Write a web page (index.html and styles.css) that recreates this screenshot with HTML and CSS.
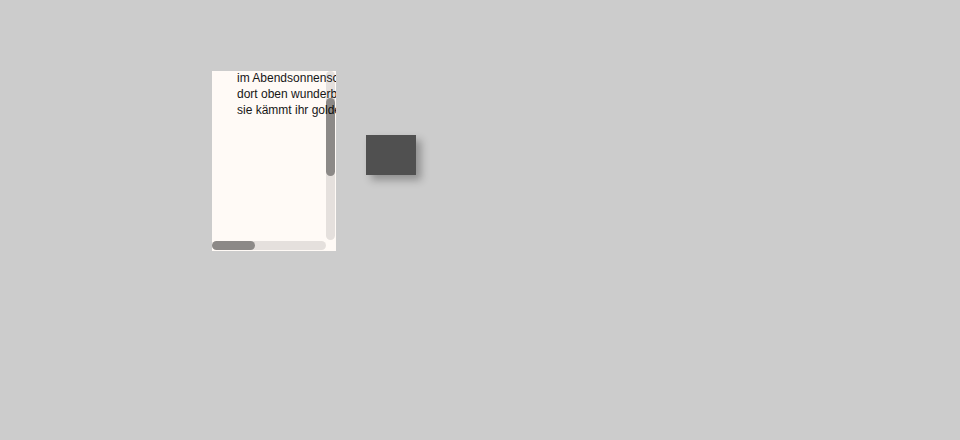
FILE: index.html
```html
<!DOCTYPE html>
<html>
<head>
<meta charset="utf-8">
<link rel="stylesheet" href="styles.css">
</head>
<body>
<div class="stage">
  <div class="scroller">
    <div class="content">
      <p class="line">im Abendsonnenschein</p>
      <p class="line">dort oben wunderbar</p>
      <p class="line">sie kämmt ihr goldenes Haar</p>
    </div>
    <div class="track track-v"><div class="thumb thumb-v"></div></div>
    <div class="track track-h"><div class="thumb thumb-h"></div></div>
  </div>
  <div class="block"></div>
</div>
</body>
</html>
```
FILE: styles.css
```css
html, body {
  margin: 0;
  padding: 0;
  background: #cccccc;
  width: 960px;
  height: 440px;
  overflow: hidden;
}
.stage {
  display: flex;
  align-items: flex-start;
  gap: 30px;
  padding: 71px 0 0 212px;
}
.scroller {
  position: relative;
  width: 124px;
  height: 180px;
  background: #fffaf6;
  overflow: hidden;
  flex: none;
}
.content {
  padding: 0 0 0 25px;
  margin-top: -1px;
  font-family: "Liberation Sans", Arial, sans-serif;
  font-size: 12px;
  line-height: 16px;
  color: #161616;
  white-space: nowrap;
}
.line {
  margin: 0;
}
.track {
  position: absolute;
  background: rgba(0, 0, 0, 0.1);
  border-radius: 5px;
}
.thumb {
  position: absolute;
  background: rgba(0, 0, 0, 0.39);
  border-radius: 5px;
}
.track-v {
  top: 0;
  right: 1px;
  width: 9px;
  bottom: 11px;
}
.thumb-v {
  left: 0;
  right: 0;
  top: 27px;
  height: 78px;
}
.track-h {
  left: 0;
  bottom: 1px;
  width: 114px;
  height: 9px;
}
.thumb-h {
  top: 0;
  bottom: 0;
  left: 0;
  width: 43px;
}
.block {
  flex: none;
  width: 50px;
  height: 40px;
  margin-top: 64px;
  background: #505050;
  box-shadow: 5px 5px 8px rgba(0, 0, 0, 0.3);
}
```
